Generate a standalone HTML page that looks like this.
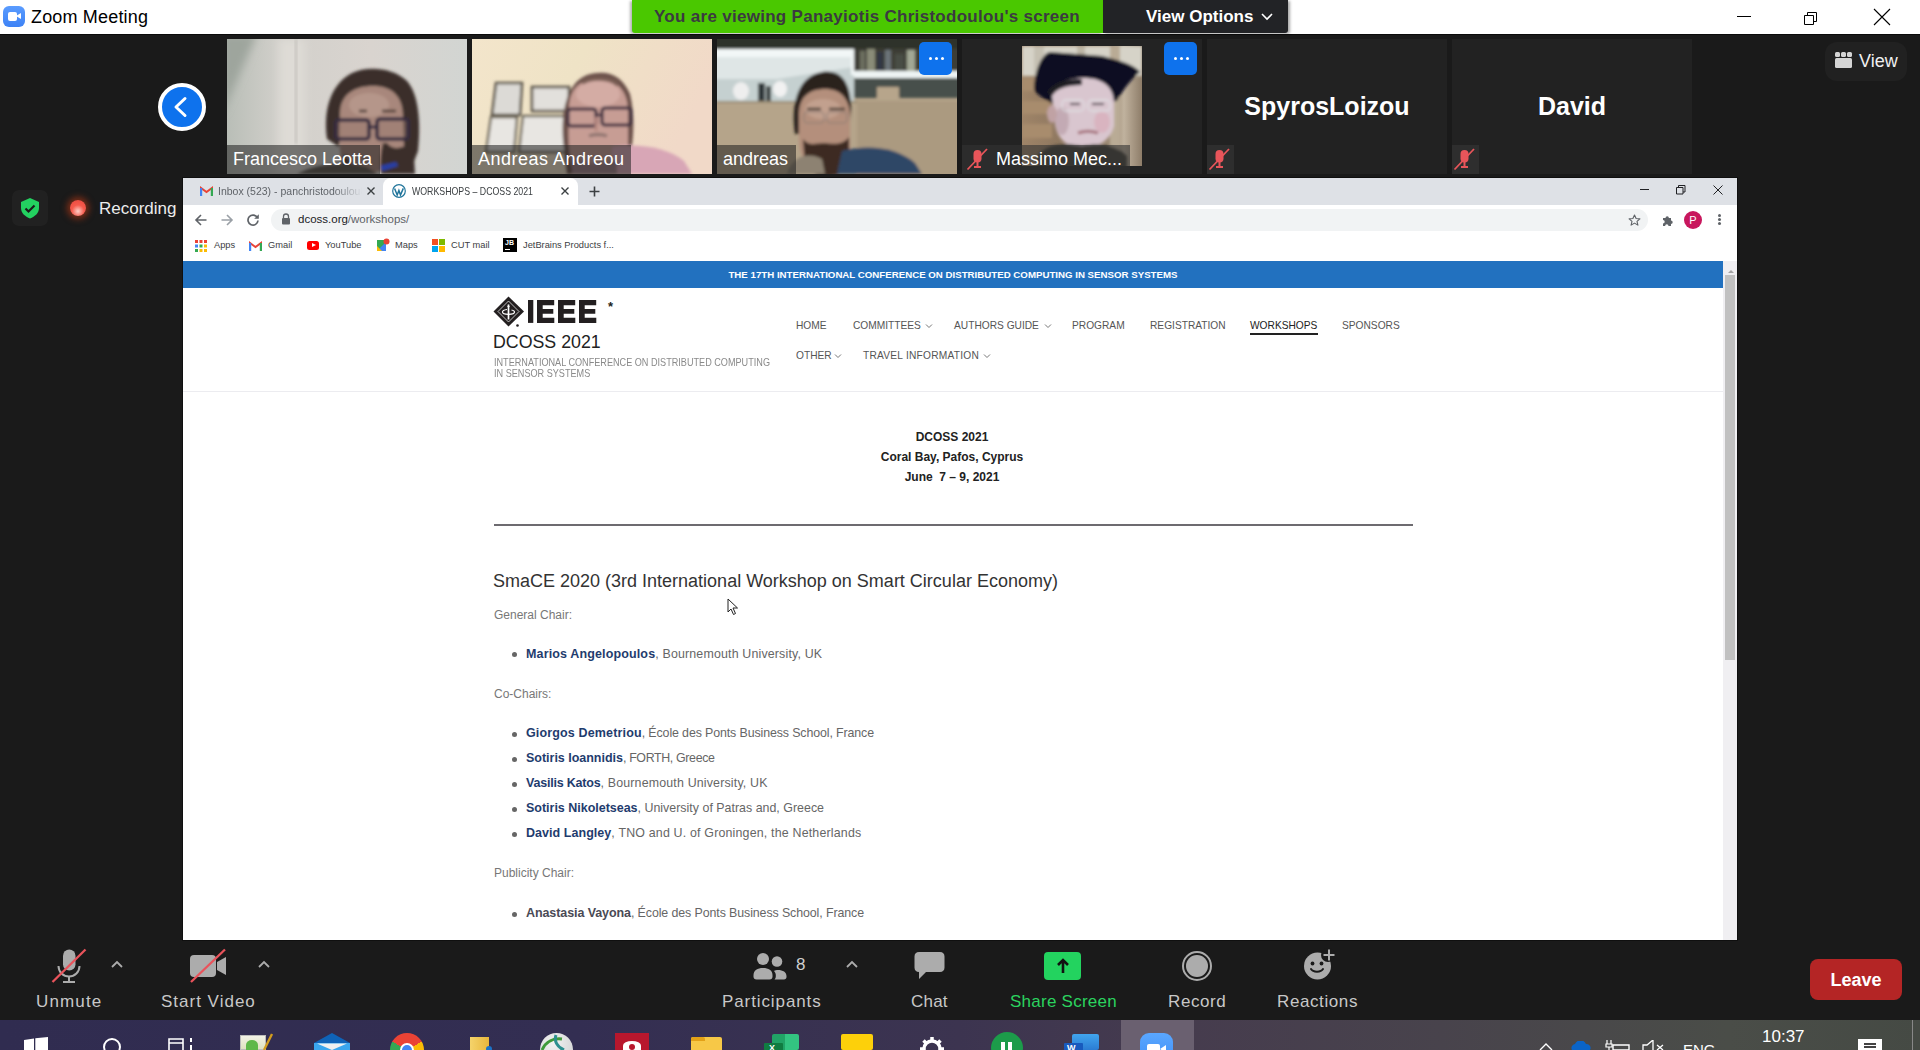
<!DOCTYPE html>
<html><head><meta charset="utf-8">
<style>
*{margin:0;padding:0;box-sizing:border-box}
html,body{width:1920px;height:1050px;overflow:hidden;background:#1a1a1a;font-family:"Liberation Sans",sans-serif}
.a{position:absolute}
.t{position:absolute;white-space:nowrap;line-height:1}
</style></head><body>
<!-- TITLE BAR -->
<div class="a" style="left:0;top:0;width:1920px;height:34px;background:#fff"></div>
<div class="a" style="left:0;top:34px;width:1920px;height:1px;background:#0b0b0b"></div>
<div class="a" style="left:3px;top:6px;width:22px;height:21px;border-radius:6px;background:linear-gradient(#5a9cff,#3d82f5)"></div>
<div class="a" style="left:8px;top:12px;width:9px;height:9px;border-radius:2px;background:#fff"></div>
<div class="a" style="left:16px;top:13px;width:0;height:0;border-top:3.5px solid transparent;border-bottom:3.5px solid transparent;border-right:5px solid #fff"></div>
<div class="t" style="left:31px;top:8px;font-size:18px;letter-spacing:0.17px;color:#000">Zoom Meeting</div>
<!-- green banner -->
<div class="a" style="left:632px;top:0;width:471px;height:33px;background:#4ac800;border-radius:0 0 0 3px;box-shadow:-2px 1px 3px rgba(0,0,0,.3)"></div>
<div class="t" style="left:654px;top:8px;font-size:17px;letter-spacing:0.29px;font-weight:bold;color:#3b3a40">You are viewing Panayiotis Christodoulou's screen</div>
<div class="a" style="left:1103px;top:0;width:185px;height:33px;background:#222326;border-radius:0 0 3px 0;box-shadow:2px 1px 3px rgba(0,0,0,.35)"></div>
<div class="t" style="left:1146px;top:8px;font-size:17px;font-weight:bold;color:#fff">View Options</div>
<svg class="a" style="left:1260px;top:11px" width="14" height="10"><path d="M2 3 L7 8 L12 3" stroke="#fff" stroke-width="1.6" fill="none"/></svg>
<!-- window controls -->
<div class="a" style="left:1737px;top:16px;width:14px;height:1px;background:#000"></div>
<svg class="a" style="left:1800px;top:7px" width="20" height="20"><path d="M4.5 8.5h9v9h-9z" stroke="#000" stroke-width="1" fill="none"/><path d="M7.5 8.5v-3h9v9h-3" stroke="#000" stroke-width="1" fill="none"/></svg>
<svg class="a" style="left:1872px;top:7px" width="20" height="20"><path d="M2 2L18 18M18 2L2 18" stroke="#000" stroke-width="1.1" fill="none"/></svg>

<!-- VIDEO STRIP -->
<!-- back arrow -->
<div class="a" style="left:158px;top:83px;width:48px;height:48px;border-radius:50%;background:#0e72ed;border:4.5px solid #fff"></div>
<svg class="a" style="left:170px;top:95px" width="24" height="24"><path d="M15 3.5 L6 12 L15 20.5" stroke="#fff" stroke-width="3" stroke-linecap="round" stroke-linejoin="round" fill="none"/></svg>

<!-- tile 1 Francesco -->
<svg class="a" style="left:227px;top:39px" width="240" height="135">
<defs><filter id="bl2" x="-20%" y="-20%" width="140%" height="140%"><feGaussianBlur stdDeviation="1.6"/></filter><filter id="bl4" x="-30%" y="-30%" width="160%" height="160%"><feGaussianBlur stdDeviation="4"/></filter>
<linearGradient id="g1" x1="0" y1="0" x2="1" y2="0"><stop offset="0" stop-color="#b9beb7"/><stop offset=".22" stop-color="#d2d0cb"/><stop offset=".6" stop-color="#d9d4cf"/><stop offset="1" stop-color="#d2d5d2"/></linearGradient></defs>
<rect width="240" height="135" fill="url(#g1)"/>
<path d="M-5 -5H30L-5 75z" fill="#9ea59d" filter="url(#bl4)"/>
<rect x="52" y="0" width="26" height="135" fill="#dedbd6" filter="url(#bl4)"/>
<rect x="68" y="0" width="2" height="105" fill="#c2bfba" filter="url(#bl2)"/>
<g filter="url(#bl2)">
<path d="M100 100C96 70 104 45 125 34C140 27 165 28 180 42C192 55 194 85 191 112L186 125H170L172 60C160 50 130 50 118 62L112 108z" fill="#3b2f29"/>
<path d="M113 75C113 55 128 47 146 47C165 47 176 57 176 78L177 110C170 128 150 135 135 135H118C112 120 112 100 113 75z" fill="#a8877b"/>
<ellipse cx="142" cy="66" rx="20" ry="12" fill="#b5968a"/>
<path d="M156 104C152 118 154 135 154 135H188L186 100C178 110 166 112 160 104z" fill="#3a2e2a"/>
<path d="M118 115C125 125 130 135 130 135H120C114 128 114 120 118 115z" fill="#4a3a33"/>
<rect x="109" y="81" width="33" height="19" rx="3" fill="#9a7b72" fill-opacity=".5" stroke="#352a3f" stroke-width="3.6"/>
<rect x="150" y="80" width="31" height="20" rx="3" fill="#9a7b72" fill-opacity=".5" stroke="#352a3f" stroke-width="3.6"/>
<path d="M142 88h8" stroke="#352a3f" stroke-width="3"/>
<path d="M132 72h8M155 72h14" stroke="#4a3830" stroke-width="2.5"/>
<path d="M70 135C90 124 120 122 140 128L150 135z" fill="#5b544e"/>
<path d="M153 127l16-4 2 4-16 5z" fill="#2741a8"/>
</g>
</svg>
<div class="a" style="left:227px;top:145px;width:153px;height:29px;background:rgba(30,30,30,.55)"></div>
<div class="t" style="left:233px;top:150px;font-size:18px;color:#fff">Francesco Leotta</div>

<!-- tile 2 Andreas Andreou -->
<svg class="a" style="left:472px;top:39px" width="240" height="135">
<defs><linearGradient id="g2" x1="0" y1="0" x2="1" y2="0.3"><stop offset="0" stop-color="#f3e5cb"/><stop offset=".45" stop-color="#efe3c6"/><stop offset="1" stop-color="#f1d9c8"/></linearGradient></defs>
<rect width="240" height="135" fill="url(#g2)"/>
<g filter="url(#bl2)">
<path d="M24 44H50L48 76H20z" fill="#dcdad6" stroke="#5a5346" stroke-width="2.6"/>
<rect x="60" y="48" width="37" height="24" fill="#e2e0dc" stroke="#5a5346" stroke-width="2.6"/>
<path d="M19 78H45L42 113H14z" fill="#e8e6e2" stroke="#6e6759" stroke-width="2.4"/>
<path d="M51 77H94V113H47z" fill="#e8e6e2" stroke="#6e6759" stroke-width="2.4"/>
<path d="M92 110C88 80 92 45 115 36C135 30 150 36 158 55C163 75 162 100 158 118L150 135H95z" fill="#6b5048"/>
<path d="M97 70C97 50 108 40 126 40C145 40 156 52 156 72V108C150 126 132 135 118 135H102C96 120 96 95 97 70z" fill="#c79d94"/>
<ellipse cx="126" cy="55" rx="22" ry="13" fill="#d4aca4"/>
<path d="M110 44C118 38 138 38 146 46" stroke="#7a5e55" stroke-width="4" fill="none"/>
<rect x="96" y="70" width="28" height="17" rx="3" fill="none" stroke="#3e2f3f" stroke-width="3"/>
<rect x="130" y="69" width="29" height="17" rx="3" fill="none" stroke="#3e2f3f" stroke-width="3"/>
<path d="M124 76h6" stroke="#3e2f3f" stroke-width="2.5"/>
<path d="M117 97C122 95 130 95 135 97" stroke="#8f7470" stroke-width="3.5" fill="none"/><path d="M124 78V92" stroke="#b5877f" stroke-width="3"/>
<path d="M140 108C165 104 195 108 212 122L220 135H140z" fill="#d8a6b6"/>
<path d="M100 118C110 125 130 128 145 120L145 135H100z" fill="#9c7e86"/>
</g>
</svg>
<div class="a" style="left:472px;top:145px;width:159px;height:29px;background:rgba(30,30,30,.55)"></div>
<div class="t" style="left:478px;top:150px;font-size:18px;letter-spacing:0.5px;color:#fff">Andreas Andreou</div>

<!-- tile 3 andreas -->
<svg class="a" style="left:717px;top:39px" width="240" height="135">
<rect width="240" height="135" fill="#b5a48a"/>
<g filter="url(#bl2)">
<rect x="-5" y="-5" width="250" height="16" fill="#2f312b"/>
<rect x="-5" y="18" width="142" height="45" fill="#c5d0d0"/>
<path d="M-5 18H137V28L60 40H-5z" fill="#dfe6e6"/>
<rect x="-5" y="10" width="143" height="8" fill="#f2f7f7"/>
<rect x="134" y="10" width="5" height="26" fill="#f2f7f7"/>
<rect x="137" y="10" width="108" height="23" fill="#3d3e36"/>
<rect x="143" y="12" width="5" height="20" fill="#6d7060"/><rect x="150" y="10" width="8" height="22" fill="#8a8c78"/><rect x="160" y="13" width="6" height="19" fill="#333845"/><rect x="168" y="11" width="6" height="21" fill="#6c7378"/><rect x="178" y="15" width="9" height="17" fill="#4a4d45"/><rect x="190" y="11" width="8" height="21" fill="#a2a794"/>
<rect x="137" y="32" width="108" height="7" fill="#eef4f4"/>
<rect x="137" y="39" width="108" height="20" fill="#47504c"/>
<rect x="160" y="48" width="22" height="12" fill="#b7a58b"/>
<ellipse cx="24" cy="52" rx="8" ry="9" fill="#eeeeee"/>
<rect x="41" y="44" width="7" height="18" fill="#2f3638"/><rect x="49" y="47" width="5" height="15" fill="#39403f"/>
<ellipse cx="63" cy="50" rx="7" ry="8" fill="#f2f2f2"/>
<rect x="-5" y="62" width="250" height="2" fill="#9a8c75"/>
<rect x="140" y="62" width="105" height="80" fill="#ab9a80"/>
<path d="M78 95C74 70 78 38 105 33C125 30 134 45 134 70L132 95z" fill="#2b231e"/>
<path d="M82 75C82 58 92 50 108 50C124 50 133 60 133 78V110C128 125 115 132 105 132C92 132 84 120 82 105z" fill="#b48f7b"/>
<ellipse cx="106" cy="70" rx="18" ry="10" fill="#c2a08e"/>
<path d="M90 70h14M112 70h16" stroke="#4a3a30" stroke-width="2.5"/>
<rect x="87" y="73" width="20" height="11" rx="3" fill="none" stroke="#8d7f78" stroke-width="1"/>
<rect x="110" y="73" width="20" height="11" rx="3" fill="none" stroke="#8d7f78" stroke-width="1"/>
<path d="M86 100C92 108 100 104 106 104C114 104 124 108 132 98L132 130C120 140 95 140 88 128z" fill="#3d2b22"/>
<path d="M125 112C150 105 180 108 198 124L205 135H120z" fill="#2e4666"/>
<path d="M70 135C75 118 90 112 105 120L108 135z" fill="#8d8272"/>
</g>
</svg>
<div class="a" style="left:717px;top:145px;width:79px;height:29px;background:rgba(30,30,30,.55)"></div>
<div class="t" style="left:723px;top:150px;font-size:18px;color:#fff">andreas</div>
<div class="a" style="left:919px;top:42px;width:33px;height:33px;border-radius:5px;background:#0e72ed"></div>
<div class="a" style="left:929px;top:57px;width:3px;height:3px;border-radius:50%;background:#fff;box-shadow:6px 0 0 #fff,12px 0 0 #fff"></div>

<!-- tile 4 Massimo -->
<div class="a" style="left:962px;top:39px;width:240px;height:135px;background:#232323"></div>
<svg class="a" style="left:1022px;top:46px" width="120" height="120">
<defs><linearGradient id="g4" x1="0" y1="0" x2="1" y2="0"><stop offset="0" stop-color="#9f8468"/><stop offset=".3" stop-color="#8f7860"/><stop offset=".75" stop-color="#9c8a74"/><stop offset=".85" stop-color="#c0b29e"/><stop offset="1" stop-color="#8e7d69"/></linearGradient></defs>
<rect width="120" height="120" fill="url(#g4)"/>
<g filter="url(#bl2)">
<rect x="0" y="0" width="120" height="30" fill="#d6d3c8"/>
<rect x="12" y="0" width="10" height="30" fill="#c5c0b2"/><rect x="55" y="0" width="8" height="30" fill="#bdb6a6"/><rect x="88" y="0" width="10" height="120" fill="#b9ab95"/>
<path d="M0 32H25V45H0zM0 55H28V68H0zM0 78H30V92H0z" fill="#a88c6d"/>
<path d="M12 40C14 22 20 8 28 6L80 10C95 14 112 18 118 26C112 30 100 45 95 55L40 60C30 58 18 52 12 44z" fill="#0e1122"/>
<path d="M30 50C32 38 45 32 62 32C80 32 92 40 92 58V80C88 95 75 102 60 102C45 102 35 92 33 78z" fill="#d9c6cf"/><ellipse cx="80" cy="76" rx="8" ry="11" fill="#d8a9b5" fill-opacity=".6"/><ellipse cx="40" cy="75" rx="7" ry="14" fill="#c3aab4"/>
<ellipse cx="30" cy="68" rx="5" ry="9" fill="#c0a2a4"/>
<path d="M28 48C32 40 45 36 60 36" stroke="#1a1a22" stroke-width="6" fill="none"/>
<rect x="40" y="54" width="22" height="11" rx="4" fill="none" stroke="#e0e0e4" stroke-width="1.3"/>
<rect x="66" y="54" width="22" height="11" rx="4" fill="none" stroke="#e0e0e4" stroke-width="1.3"/>
<path d="M48 58h10M70 58h12" stroke="#3b3040" stroke-width="2"/>
<path d="M56 87C62 85 70 85 76 87" stroke="#a6707a" stroke-width="3" fill="none"/>

<path d="M15 110C25 98 40 96 60 100C80 96 95 100 105 110V125H15z" fill="#3d3a32"/>
</g>
</svg>
<div class="a" style="left:962px;top:145px;width:168px;height:29px;background:rgba(50,50,50,.6)"></div>
<svg class="a" style="left:966px;top:147px" width="24" height="24"><rect x="7.5" y="3" width="8" height="12.5" rx="4" fill="#e8555a"/><path d="M11.5 15v4M8 20h7" stroke="#e8555a" stroke-width="2"/><path d="M1.5 22.5L21 2" stroke="#e8555a" stroke-width="1.8"/></svg>
<div class="t" style="left:996px;top:150px;font-size:18px;color:#fff">Massimo Mec...</div>
<div class="a" style="left:1164px;top:42px;width:33px;height:33px;border-radius:5px;background:#0e72ed"></div>
<div class="a" style="left:1174px;top:57px;width:3px;height:3px;border-radius:50%;background:#fff;box-shadow:6px 0 0 #fff,12px 0 0 #fff"></div>

<!-- tile 5 -->
<div class="a" style="left:1207px;top:39px;width:240px;height:135px;background:#222"></div>
<div class="t" style="left:1207px;top:94px;width:240px;text-align:center;font-size:25px;font-weight:bold;color:#fff">SpyrosLoizou</div>
<div class="a" style="left:1207px;top:145px;width:27px;height:29px;background:#2e2e2e"></div>
<svg class="a" style="left:1208px;top:147px" width="24" height="24"><rect x="7.5" y="3" width="8" height="12.5" rx="4" fill="#e8555a"/><path d="M11.5 15v4M8 20h7" stroke="#e8555a" stroke-width="2"/><path d="M1.5 22.5L21 2" stroke="#e8555a" stroke-width="1.8"/></svg>
<!-- tile 6 -->
<div class="a" style="left:1452px;top:39px;width:240px;height:135px;background:#222"></div>
<div class="t" style="left:1452px;top:94px;width:240px;text-align:center;font-size:25px;font-weight:bold;color:#fff">David</div>
<div class="a" style="left:1452px;top:145px;width:27px;height:29px;background:#2e2e2e"></div>
<svg class="a" style="left:1453px;top:147px" width="24" height="24"><rect x="7.5" y="3" width="8" height="12.5" rx="4" fill="#e8555a"/><path d="M11.5 15v4M8 20h7" stroke="#e8555a" stroke-width="2"/><path d="M1.5 22.5L21 2" stroke="#e8555a" stroke-width="1.8"/></svg>

<!-- View button -->
<div class="a" style="left:1825px;top:42px;width:82px;height:39px;border-radius:12px;background:#212121"></div>
<div class="a" style="left:1835px;top:52px;width:5px;height:5px;border-radius:1.5px;background:#d4d4d4;box-shadow:6px 0 0 #d4d4d4,12px 0 0 #d4d4d4"></div>
<div class="a" style="left:1835px;top:58px;width:17px;height:10px;border-radius:1.5px;background:#d4d4d4"></div>
<div class="t" style="left:1859px;top:52px;font-size:18px;color:#f0f0f0">View</div>

<!-- shield + recording -->
<div class="a" style="left:12px;top:190px;width:36px;height:36px;border-radius:7px;background:#212121"></div>
<svg class="a" style="left:19px;top:197px" width="22" height="23"><path d="M11 1 L20 5 V11 C20 16 16 19.5 11 21.5 C6 19.5 2 16 2 11 V5 Z" fill="#23d160"/><path d="M6.5 11.5 L9.5 14.5 L15.5 8.5" stroke="#1b1b1b" stroke-width="2.2" fill="none"/></svg>
<div class="a" style="left:70px;top:200px;width:16px;height:16px;border-radius:50%;background:radial-gradient(circle at 50% 70%,#ffd0c8 0%,#f65a4c 45%,#e8473c 100%);box-shadow:0 0 6px 3px rgba(200,60,20,.55)"></div>
<div class="t" style="left:99px;top:200px;font-size:17px;color:#ececec">Recording</div>

<!-- BROWSER -->
<div class="a" style="left:182px;top:177px;width:1556px;height:764px;background:#0f0f0f"></div>
<div class="a" style="left:183px;top:178px;width:1554px;height:762px;background:#fff;overflow:hidden">
  <!-- tab strip -->
  <div class="a" style="left:0;top:0;width:1554px;height:27px;background:#dee1e6"></div>
  <!-- inactive tab icons -->
  <svg class="a" style="left:17px;top:8px" width="13" height="10"><path d="M1 10V2l5.5 4L12 2v8" stroke="#ea4335" stroke-width="2" fill="none"/><path d="M1 10V2" stroke="#4285f4" stroke-width="2.4"/><path d="M12 10V2" stroke="#34a853" stroke-width="2.4"/></svg>
  <div class="t" style="left:35px;top:8px;width:144px;overflow:hidden;font-size:10.5px;color:#5f6368;-webkit-mask-image:linear-gradient(90deg,#000 80%,transparent 100%)">Inbox (523) - panchristodoulou87</div>
  <svg class="a" style="left:183px;top:8px" width="10" height="10"><path d="M1.5 1.5l7 7M8.5 1.5l-7 7" stroke="#3c4043" stroke-width="1.4"/></svg>
  <!-- active tab -->
  <div class="a" style="left:200px;top:0;width:195px;height:30px;background:#fff;border-radius:8px 8px 0 0"></div>
  <svg class="a" style="left:209px;top:6px" width="14" height="14"><circle cx="7" cy="7" r="6.3" fill="#fff" stroke="#21759b" stroke-width="1.2"/><path d="M2.6 4.5l2.6 6.5 1.7-4.5 1.6 4.5 2.8-6.6" stroke="#21759b" stroke-width="1.5" fill="none"/></svg>
  <div class="t" style="left:229px;top:8px;font-size:10.5px;color:#3c4043;transform:scaleX(0.836);transform-origin:0 0">WORKSHOPS – DCOSS 2021</div>
  <svg class="a" style="left:377px;top:8px" width="10" height="10"><path d="M1.5 1.5l7 7M8.5 1.5l-7 7" stroke="#3c4043" stroke-width="1.4"/></svg>
  <svg class="a" style="left:405px;top:7px" width="13" height="13"><path d="M6.5 1.5v10M1.5 6.5h10" stroke="#3c4043" stroke-width="1.6"/></svg>
  <!-- window controls -->
  <div class="a" style="left:1457px;top:11px;width:9px;height:1px;background:#202124"></div>
  <svg class="a" style="left:1492px;top:6px" width="12" height="12"><path d="M1.5 3.5h6.5v6.5h-6.5z" stroke="#202124" stroke-width="1" fill="none"/><path d="M3.5 3.5v-2h6.5v6.5h-2" stroke="#202124" stroke-width="1" fill="none"/></svg>
  <svg class="a" style="left:1529px;top:6px" width="12" height="12"><path d="M1.5 1.5l9 9M10.5 1.5l-9 9" stroke="#202124" stroke-width="1"/></svg>

  <!-- toolbar -->
  <svg class="a" style="left:11px;top:35px" width="14" height="14"><path d="M12.5 7H2M7 2L2 7l5 5" stroke="#5f6368" stroke-width="1.6" fill="none"/></svg>
  <svg class="a" style="left:37px;top:35px" width="14" height="14"><path d="M1.5 7H12M7 2l5 5-5 5" stroke="#9aa0a6" stroke-width="1.6" fill="none"/></svg>
  <svg class="a" style="left:63px;top:35px" width="14" height="14"><path d="M11.3 4.5A5 5 0 1 0 12 7.5" stroke="#5f6368" stroke-width="1.7" fill="none"/><path d="M12.8 1.2v4.6H8.2z" fill="#5f6368"/></svg>
  <div class="a" style="left:88px;top:31px;width:1377px;height:22px;border-radius:11px;background:#f1f3f4"></div>
  <svg class="a" style="left:98px;top:35px" width="10" height="12"><path d="M2.5 5V3.5a2.5 2.5 0 0 1 5 0V5" stroke="#5f6368" stroke-width="1.3" fill="none"/><rect x="1" y="5" width="8" height="6.5" rx="1" fill="#5f6368"/></svg>
  <div class="t" style="left:115px;top:36px;font-size:11.5px;color:#202124">dcoss.org<span style="color:#5f6368">/workshops/</span></div>
  <svg class="a" style="left:1445px;top:36px" width="13" height="13"><path d="M6.5 1l1.6 3.5 3.8.4-2.9 2.5.9 3.7-3.4-2-3.4 2 .9-3.7L1.1 4.9l3.8-.4z" stroke="#5f6368" stroke-width="1.1" fill="none" stroke-linejoin="round"/></svg>
  <svg class="a" style="left:1478px;top:36px" width="13" height="13"><path d="M2 4h2.5a1.7 1.7 0 0 1 3.4 0H10v2.5a1.7 1.7 0 0 1 0 3.4V12H7.5a1.7 1.7 0 0 0-3.4 0H2V9.5a1.7 1.7 0 0 0 0-3.4z" fill="#5f6368"/></svg>
  <div class="a" style="left:1501px;top:33px;width:18px;height:18px;border-radius:50%;background:#c8175d"></div>
  <div class="t" style="left:1501px;top:37px;width:18px;text-align:center;font-size:11px;color:#fff">P</div>
  <div class="a" style="left:1535px;top:36px;width:3px;height:3px;border-radius:50%;background:#5f6368;box-shadow:0 4px 0 #5f6368,0 8px 0 #5f6368"></div>

  <!-- bookmarks -->
  <svg class="a" style="left:12px;top:62px" width="12" height="12"><g fill="#ea4335"><rect x="0" y="0" width="3" height="3"/><rect x="4.5" y="0" width="3" height="3"/><rect x="9" y="0" width="3" height="3"/></g><g fill="#4285f4"><rect x="0" y="4.5" width="3" height="3"/></g><g fill="#34a853"><rect x="4.5" y="4.5" width="3" height="3"/><rect x="0" y="9" width="3" height="3"/></g><g fill="#fbbc04"><rect x="9" y="4.5" width="3" height="3"/><rect x="4.5" y="9" width="3" height="3"/><rect x="9" y="9" width="3" height="3"/></g></svg>
  <div class="t" style="left:31px;top:63px;font-size:9.3px;color:#3c4043">Apps</div>
  <svg class="a" style="left:66px;top:63px" width="13" height="10"><path d="M1 10V2l5.5 4L12 2v8" stroke="#ea4335" stroke-width="2" fill="none"/><path d="M1 10V2" stroke="#4285f4" stroke-width="2.4"/><path d="M12 10V2" stroke="#34a853" stroke-width="2.4"/></svg>
  <div class="t" style="left:85px;top:63px;font-size:9.3px;color:#3c4043">Gmail</div>
  <div class="a" style="left:124px;top:63px;width:12px;height:9px;border-radius:2.5px;background:#f00"></div>
  <div class="a" style="left:128.5px;top:65px;width:0;height:0;border-top:2.5px solid transparent;border-bottom:2.5px solid transparent;border-left:4px solid #fff"></div>
  <div class="t" style="left:142px;top:63px;font-size:9.3px;color:#3c4043">YouTube</div>
  <svg class="a" style="left:194px;top:60px" width="13" height="13"><path d="M0 2h9v11H0z" fill="#34a853"/><path d="M0 13L9 4v9z" fill="#4285f4"/><path d="M0 8l5 5H0z" fill="#fbbc04"/><circle cx="9.5" cy="3.5" r="3" fill="#ea4335"/></svg>
  <div class="t" style="left:212px;top:63px;font-size:9.3px;color:#3c4043">Maps</div>
  <svg class="a" style="left:249px;top:61px" width="13" height="13"><rect x="0" y="0" width="6" height="6" fill="#f25022"/><rect x="7" y="0" width="6" height="6" fill="#7fba00"/><rect x="0" y="7" width="6" height="6" fill="#00a4ef"/><rect x="7" y="7" width="6" height="6" fill="#ffb900"/></svg>
  <div class="t" style="left:268px;top:63px;font-size:9.3px;color:#3c4043">CUT mail</div>
  <div class="a" style="left:320px;top:60px;width:14px;height:14px;background:#000"></div>
  <div class="t" style="left:322px;top:61px;font-size:7px;font-weight:bold;color:#fff">JB</div>
  <div class="a" style="left:322px;top:71px;width:5px;height:1px;background:#fff"></div>
  <div class="t" style="left:340px;top:63px;font-size:9.3px;color:#3c4043">JetBrains Products f...</div>

  <!-- PAGE -->
  <div class="a" style="left:0;top:83px;width:1540px;height:27px;background:#2271bf"></div>
  <div class="t" style="left:0;top:92px;width:1540px;text-align:center;font-size:9.7px;font-weight:bold;color:#fff">THE 17TH INTERNATIONAL CONFERENCE ON DISTRIBUTED COMPUTING IN SENSOR SYSTEMS</div>
  <!-- scrollbar -->
  <div class="a" style="left:1540px;top:83px;width:14px;height:679px;background:#f0eff2"></div>
  <div class="a" style="left:1545px;top:92px;width:0;height:0;border-left:3px solid transparent;border-right:3px solid transparent;border-bottom:3px solid #a3a3a3"></div>
  <div class="a" style="left:1542px;top:97px;width:10px;height:385px;background:#c1c1c1"></div>
</div>

<!-- PAGE CONTENT (absolute coords) -->
<div class="a" style="left:183px;top:288px;width:1540px;height:652px;background:#fff"></div>
<div class="a" style="left:183px;top:391px;width:1540px;height:1px;background:#ececf0"></div>
<!-- IEEE logo -->
<svg class="a" style="left:493px;top:296px" width="32" height="32"><path d="M15.5 0.5L31 15.5 15.5 30.5 0.5 15.5z" fill="#231f20"/><path d="M15.5 5L26 15.5 15.5 26 5 15.5z" fill="none" stroke="#fff" stroke-width=".7"/><path d="M15.5 8.5v15" stroke="#fff" stroke-width="1.7"/><path d="M15.5 8.5l-1.3 2.5h2.6z" fill="#fff"/><path d="M14 13.5c-3 .3-4.5 1.5-4.5 2.5 0 1.3 2.5 2.3 6 2.3s6-1 6-2.3c0-.8-1-1.6-3-2" stroke="#fff" stroke-width="1.2" fill="none"/><circle cx="24.5" cy="29.5" r="1.3" fill="#231f20"/></svg>
<svg class="a" style="left:528px;top:300px" width="70" height="23"><g fill="#231f20"><rect x="0" y="0" width="5.3" height="22.9"/><path d="M9.0 0h17.2v5.3h-11.5v3.6h10.6v4.8h-10.6v4.1h11.6v5.1h-17.3z"/><path d="M30.0 0h17.2v5.3h-11.5v3.6h10.6v4.8h-10.6v4.1h11.6v5.1h-17.3z"/><path d="M51.0 0h17.2v5.3h-11.5v3.6h10.6v4.8h-10.6v4.1h11.6v5.1h-17.3z"/></g></svg>
<div class="t" style="left:608px;top:300px;font-size:13px;font-weight:bold;color:#231f20">*</div>
<div class="t" style="left:493px;top:334px;font-size:17.8px;color:#222">DCOSS 2021</div>
<div class="t" style="left:494px;top:357px;font-size:10.5px;color:#8a8a8a;line-height:10.5px;transform:scaleX(0.868);transform-origin:0 0">INTERNATIONAL CONFERENCE ON DISTRIBUTED COMPUTING<br>IN SENSOR SYSTEMS</div>
<!-- nav -->
<div class="t" style="left:796px;top:321px;font-size:10.2px;color:#555">HOME</div>
<div class="t" style="left:853px;top:321px;font-size:10.2px;color:#555">COMMITTEES</div>
<svg class="a" style="left:925px;top:323px" width="8" height="6"><path d="M1 1.5l3 3 3-3" stroke="#777" stroke-width="1" fill="none"/></svg>
<div class="t" style="left:954px;top:321px;font-size:10.2px;color:#555">AUTHORS GUIDE</div>
<svg class="a" style="left:1044px;top:323px" width="8" height="6"><path d="M1 1.5l3 3 3-3" stroke="#777" stroke-width="1" fill="none"/></svg>
<div class="t" style="left:1072px;top:321px;font-size:10.2px;color:#555">PROGRAM</div>
<div class="t" style="left:1150px;top:321px;font-size:10.2px;color:#555">REGISTRATION</div>
<div class="t" style="left:1250px;top:321px;font-size:10.2px;color:#222">WORKSHOPS</div>
<div class="a" style="left:1250px;top:333px;width:68px;height:2px;background:#222"></div>
<div class="t" style="left:1342px;top:321px;font-size:10.2px;color:#555">SPONSORS</div>
<div class="t" style="left:796px;top:351px;font-size:10.2px;color:#555">OTHER</div>
<svg class="a" style="left:834px;top:353px" width="8" height="6"><path d="M1 1.5l3 3 3-3" stroke="#777" stroke-width="1" fill="none"/></svg>
<div class="t" style="left:863px;top:351px;font-size:10.2px;letter-spacing:0.23px;color:#555">TRAVEL INFORMATION</div>
<svg class="a" style="left:983px;top:353px" width="8" height="6"><path d="M1 1.5l3 3 3-3" stroke="#777" stroke-width="1" fill="none"/></svg>

<!-- centered heading -->
<div class="t" style="left:752px;top:427px;width:400px;text-align:center;font-size:12px;font-weight:bold;color:#222;line-height:20px;white-space:normal">DCOSS 2021<br>Coral Bay, Pafos, Cyprus<br>June&nbsp; 7 – 9, 2021</div>
<div class="a" style="left:494px;top:524px;width:919px;height:2px;background:#6d6b70"></div>

<div class="t" style="left:493px;top:572px;font-size:18px;color:#333">SmaCE 2020 (3rd International Workshop on Smart Circular Economy)</div>
<div class="t" style="left:494px;top:609px;font-size:12px;color:#777">General Chair:</div>
<div class="a" style="left:512px;top:652px;width:5px;height:5px;border-radius:50%;background:#666"></div>
<div class="t" style="left:526px;top:648px;font-size:12.4px;color:#666"><b style="color:#1f3c6e;font-size:12.5px;letter-spacing:0.137px">Marios Angelopoulos</b><span style="letter-spacing:0.168px">, Bournemouth University, UK</span></div>
<div class="t" style="left:494px;top:688px;font-size:12px;color:#777">Co-Chairs:</div>
<div class="a" style="left:512px;top:732px;width:5px;height:5px;border-radius:50%;background:#666"></div>
<div class="t" style="left:526px;top:727px;font-size:12.4px;color:#666"><b style="color:#1f3c6e;font-size:12.5px;letter-spacing:0.147px">Giorgos Demetriou</b><span style="letter-spacing:-0.115px">, École des Ponts Business School, France</span></div>
<div class="a" style="left:512px;top:757px;width:5px;height:5px;border-radius:50%;background:#666"></div>
<div class="t" style="left:526px;top:752px;font-size:12.4px;color:#666"><b style="color:#1f3c6e;font-size:12.5px;letter-spacing:-0.018px">Sotiris Ioannidis</b><span style="letter-spacing:-0.347px">, FORTH, Greece</span></div>
<div class="a" style="left:512px;top:782px;width:5px;height:5px;border-radius:50%;background:#666"></div>
<div class="t" style="left:526px;top:777px;font-size:12.4px;color:#666"><b style="color:#1f3c6e;font-size:12.5px;letter-spacing:-0.200px">Vasilis Katos</b><span style="letter-spacing:0.171px">, Bournemouth University, UK</span></div>
<div class="a" style="left:512px;top:807px;width:5px;height:5px;border-radius:50%;background:#666"></div>
<div class="t" style="left:526px;top:802px;font-size:12.4px;color:#666"><b style="color:#1f3c6e;font-size:12.5px;letter-spacing:-0.016px">Sotiris Nikoletseas</b><span style="letter-spacing:0.015px">, University of Patras and, Greece</span></div>
<div class="a" style="left:512px;top:832px;width:5px;height:5px;border-radius:50%;background:#666"></div>
<div class="t" style="left:526px;top:827px;font-size:12.4px;color:#666"><b style="color:#1f3c6e;font-size:12.5px;letter-spacing:0.046px">David Langley</b><span style="letter-spacing:0.186px">, TNO and U. of Groningen, the Netherlands</span></div>
<div class="t" style="left:494px;top:867px;font-size:12px;color:#777">Publicity Chair:</div>
<div class="a" style="left:512px;top:912px;width:5px;height:5px;border-radius:50%;background:#666"></div>
<div class="t" style="left:526px;top:907px;font-size:12.4px;color:#666"><b style="color:#4a4a55;font-size:12.5px;letter-spacing:-0.087px">Anastasia Vayona</b><span style="letter-spacing:-0.095px">, École des Ponts Business School, France</span></div>
<!-- cursor -->
<svg class="a" style="left:727px;top:598px" width="12" height="18"><path d="M1 1v13l3-3 2.5 5.5 2-1L6 10h4.5z" fill="#fff" stroke="#222" stroke-width="1"/></svg>

<!-- BOTTOM TOOLBAR -->
<svg class="a" style="left:50px;top:946px" width="40" height="40"><rect x="13" y="3.5" width="12.5" height="21" rx="6.25" fill="#acacac"/><path d="M8.5 20c0 6 4.7 10.5 10.5 10.5S29.5 26 29.5 20" stroke="#acacac" stroke-width="2" fill="none"/><path d="M19 30.5v5M13 36h12" stroke="#acacac" stroke-width="2"/><path d="M2.5 36L35.5 3.5" stroke="#e9535b" stroke-width="2.3"/></svg>
<svg class="a" style="left:110px;top:958px" width="14" height="12"><path d="M2 9l5-5 5 5" stroke="#acacac" stroke-width="1.8" fill="none"/></svg>
<div class="t" style="left:36px;top:993px;font-size:17px;letter-spacing:1.15px;color:#c8c8c8">Unmute</div>
<svg class="a" style="left:188px;top:946px" width="42" height="40"><rect x="2" y="9" width="26" height="22" rx="4" fill="#acacac"/><path d="M29 16l9-5v18l-9-5z" fill="#acacac"/><path d="M3 36L37 3.5" stroke="#e9535b" stroke-width="2.3"/></svg>
<svg class="a" style="left:257px;top:958px" width="14" height="12"><path d="M2 9l5-5 5 5" stroke="#acacac" stroke-width="1.8" fill="none"/></svg>
<div class="t" style="left:161px;top:993px;font-size:17px;letter-spacing:1.0px;color:#c8c8c8">Start Video</div>

<svg class="a" style="left:752px;top:951px" width="40" height="30"><circle cx="11" cy="8" r="6" fill="#acacac"/><circle cx="25" cy="10.5" r="5.3" fill="#acacac"/><path d="M1.5 24c0-4.5 4-7 9.5-7s9.5 2.5 9.5 7v1.5c0 2-1 3-3 3h-13c-2 0-3-1-3-3z" fill="#acacac"/><path d="M22 20c1-.6 2.5-.9 4-.9 5 0 8.5 2.3 8.5 6v1c0 1.5-1 2.5-2.5 2.5h-9.5c1-.8 1.3-2 1.3-3.5v-1c0-1.5-.6-3-1.8-4.1z" fill="#acacac"/></svg>
<div class="t" style="left:796px;top:956px;font-size:17px;color:#d0d0d0">8</div>
<svg class="a" style="left:845px;top:958px" width="14" height="12"><path d="M2 9l5-5 5 5" stroke="#acacac" stroke-width="1.8" fill="none"/></svg>
<div class="t" style="left:722px;top:993px;font-size:17px;letter-spacing:0.9px;color:#c8c8c8">Participants</div>
<svg class="a" style="left:913px;top:950px" width="34" height="32"><path d="M6 2h21c2.8 0 4.5 1.7 4.5 4.5v11c0 2.8-1.7 4.5-4.5 4.5H13l-7 7v-7c-2.8 0-4.5-1.7-4.5-4.5v-11C1.5 3.7 3.2 2 6 2z" fill="#acacac"/></svg>
<div class="t" style="left:911px;top:993px;font-size:17px;letter-spacing:0.2px;color:#c8c8c8">Chat</div>
<div class="a" style="left:1044px;top:952px;width:37px;height:28px;border-radius:4px;background:#23d35f"></div>
<svg class="a" style="left:1054px;top:956px" width="18" height="20"><path d="M9 17V4M4 9l5-5 5 5" stroke="#111" stroke-width="2.6" fill="none"/></svg>
<div class="t" style="left:1010px;top:993px;font-size:17px;letter-spacing:0.25px;color:#2bd35f">Share Screen</div>
<div class="a" style="left:1182px;top:951px;width:30px;height:30px;border-radius:50%;border:2px solid #acacac"></div>
<div class="a" style="left:1186px;top:955px;width:22px;height:22px;border-radius:50%;background:#acacac"></div>
<div class="t" style="left:1168px;top:993px;font-size:17px;letter-spacing:0.6px;color:#c8c8c8">Record</div>
<svg class="a" style="left:1300px;top:946px" width="40" height="38"><circle cx="17.5" cy="20" r="13.5" fill="#acacac"/><circle cx="28" cy="9" r="7" fill="#1a1a1a"/><path d="M29 3.5v11M23.5 9h11" stroke="#acacac" stroke-width="2"/><circle cx="12.5" cy="17.5" r="1.9" fill="#1a1a1a"/><circle cx="21.5" cy="17.5" r="1.9" fill="#1a1a1a"/><path d="M11 23c2 3.5 10 3.5 12 0" stroke="#1a1a1a" stroke-width="2" fill="none" stroke-linecap="round"/></svg>
<div class="t" style="left:1277px;top:993px;font-size:17px;letter-spacing:0.6px;color:#c8c8c8">Reactions</div>
<div class="a" style="left:1810px;top:959px;width:92px;height:41px;border-radius:8px;background:#b42525"></div>
<div class="t" style="left:1810px;top:971px;width:92px;text-align:center;font-size:18px;font-weight:bold;color:#fff">Leave</div>

<!-- TASKBAR -->
<div class="a" style="left:0;top:1020px;width:1920px;height:30px;background:linear-gradient(90deg,#302c50 0%,#332e52 30%,#3c3450 50%,#463c4e 62%,#48434c 75%,#4a4d48 90%,#454a44 100%)"></div>
<div class="a" style="left:1121px;top:1020px;width:73px;height:30px;background:#6a6070"></div>
<svg class="a" style="left:24px;top:1037px" width="25" height="13"><path d="M0 3l10-1.6V13H0z M11.3 1.2L24 0v13H11.3z" fill="#fff"/></svg>
<div class="a" style="left:103px;top:1038px;width:18px;height:18px;border-radius:50%;border:2px solid #fff"></div>
<svg class="a" style="left:168px;top:1038px" width="26" height="12"><path d="M1 12V1h14v11M1 5h14" stroke="#fff" stroke-width="1.6" fill="none"/><path d="M23 0v4M23 7v5" stroke="#fff" stroke-width="2"/></svg>
<div class="a" style="left:240px;top:1035px;width:26px;height:15px;background:linear-gradient(#f2f2e6,#dfe2c0);border:1px solid #bbb"></div>
<div class="a" style="left:246px;top:1040px;width:12px;height:10px;border-radius:50% 50% 0 0;background:#5fb84a"></div>
<svg class="a" style="left:262px;top:1032px" width="12" height="18"><path d="M2 18L10 2" stroke="#d29c1e" stroke-width="2.4"/></svg>
<svg class="a" style="left:313px;top:1033px" width="38" height="17"><path d="M1 10L19 0 37 10z" fill="#0f63b8"/><path d="M1 10h36v7H1z" fill="#3aa6ee"/><path d="M4 10.5h30L19 17z" fill="#f0f0f0"/></svg>
<div class="a" style="left:390px;top:1033px;width:34px;height:34px;border-radius:50%;background:conic-gradient(from -60deg,#ea4335 0 120deg,#fbbc05 120deg 240deg,#34a853 240deg 360deg)"></div>
<div class="a" style="left:400px;top:1043px;width:14px;height:14px;border-radius:50%;background:#4285f4;border:2.5px solid #fff"></div>
<div class="a" style="left:470px;top:1037px;width:19px;height:13px;background:linear-gradient(90deg,#f5d36b,#e8b73c)"></div>
<div class="a" style="left:486px;top:1046px;width:6px;height:6px;border-radius:50%;background:#1a73c8"></div>
<div class="a" style="left:540px;top:1033px;width:33px;height:33px;border-radius:50%;background:radial-gradient(circle at 40% 30%,#f2f2f2,#c9cbcc)"></div>
<svg class="a" style="left:540px;top:1033px" width="34" height="17"><path d="M2 17C6 8 14 5 22 6" stroke="#3f9a3a" stroke-width="3" fill="none"/><path d="M16 2C14 8 17 14 24 17" stroke="#2d8f8f" stroke-width="3" fill="none"/></svg>
<div class="a" style="left:615px;top:1033px;width:34px;height:17px;background:#b8172d"></div>
<div class="a" style="left:623px;top:1041px;width:18px;height:9px;border-radius:50% 50% 0 0;background:#fff"></div>
<div class="a" style="left:629px;top:1044px;width:6px;height:6px;border-radius:50%;background:#b8172d"></div>
<div class="a" style="left:691px;top:1037px;width:31px;height:13px;background:#f7c847;border-radius:2px 2px 0 0"></div>
<div class="a" style="left:691px;top:1037px;width:14px;height:4px;background:#e3a117;border-radius:2px 2px 0 0"></div>
<div class="a" style="left:772px;top:1034px;width:27px;height:16px;background:linear-gradient(90deg,#21a366 50%,#33c481 50%);border-radius:2px"></div>
<div class="a" style="left:764px;top:1043px;width:19px;height:10px;background:#107c41;border-radius:1px"></div>
<div class="t" style="left:769px;top:1044px;font-size:9px;font-weight:bold;color:#fff">X</div>
<div class="a" style="left:841px;top:1034px;width:32px;height:16px;background:#fdd00a;border-radius:2px"></div>
<svg class="a" style="left:918px;top:1035px" width="28" height="15"><circle cx="14" cy="14" r="8" stroke="#fff" stroke-width="3.5" fill="none"/><g stroke="#fff" stroke-width="3.5"><path d="M14 2v4M5.5 5.5l3 3M22.5 5.5l-3 3M2 14h4M22 14h4"/></g></svg>
<div class="a" style="left:991px;top:1032px;width:32px;height:32px;border-radius:50%;background:#1c9b4a"></div>
<div class="a" style="left:1001px;top:1042px;width:4px;height:8px;background:#fff;box-shadow:7px 0 0 #fff"></div>
<div class="a" style="left:1072px;top:1034px;width:27px;height:16px;background:linear-gradient(#41a5ee,#2b7cd3);border-radius:2px"></div>
<div class="a" style="left:1064px;top:1043px;width:19px;height:10px;background:#185abd;border-radius:1px"></div>
<div class="t" style="left:1067px;top:1044px;font-size:9px;font-weight:bold;color:#fff">W</div>
<div class="a" style="left:1140px;top:1033px;width:33px;height:33px;border-radius:9px;background:linear-gradient(#5aa7ff,#3e8ef5)"></div>
<div class="a" style="left:1147px;top:1044px;width:13px;height:10px;border-radius:2px;background:#fff"></div>
<div class="a" style="left:1160px;top:1045px;width:0;height:0;border-top:4px solid transparent;border-bottom:4px solid transparent;border-right:6px solid #fff"></div>
<!-- tray -->
<svg class="a" style="left:1539px;top:1042px" width="14" height="8"><path d="M1 8l6-6 6 6" stroke="#fff" stroke-width="1.4" fill="none"/></svg>
<svg class="a" style="left:1569px;top:1041px" width="24" height="9"><path d="M3 9a4 4 0 0 1 3-6 6 6 0 0 1 11 0 4 4 0 0 1 4 6z" fill="#0a64c8"/></svg>
<svg class="a" style="left:1605px;top:1040px" width="26" height="10"><path d="M2 0v4M6 0v4M1 4h6v3H1z M4 7v3" stroke="#fff" stroke-width="1.2" fill="none"/><path d="M8 5h16v5H8z" stroke="#fff" stroke-width="1.4" fill="none"/></svg>
<svg class="a" style="left:1642px;top:1040px" width="24" height="10"><path d="M1 10V5h4l6-5v10" stroke="#fff" stroke-width="1.3" fill="none"/><path d="M15 5l6 5M21 5l-6 5" stroke="#fff" stroke-width="1.3"/></svg>
<div class="t" style="left:1683px;top:1042px;font-size:15px;color:#fff">ENG</div>
<div class="t" style="left:1762px;top:1028px;font-size:17px;color:#fff">10:37</div>
<div class="a" style="left:1858px;top:1039px;width:24px;height:11px;background:#fff"></div>
<div class="a" style="left:1864px;top:1043px;width:12px;height:1.5px;background:#444;box-shadow:0 3px 0 #444"></div>
<div class="a" style="left:1912px;top:1020px;width:1px;height:30px;background:#888"></div>
</body></html>
